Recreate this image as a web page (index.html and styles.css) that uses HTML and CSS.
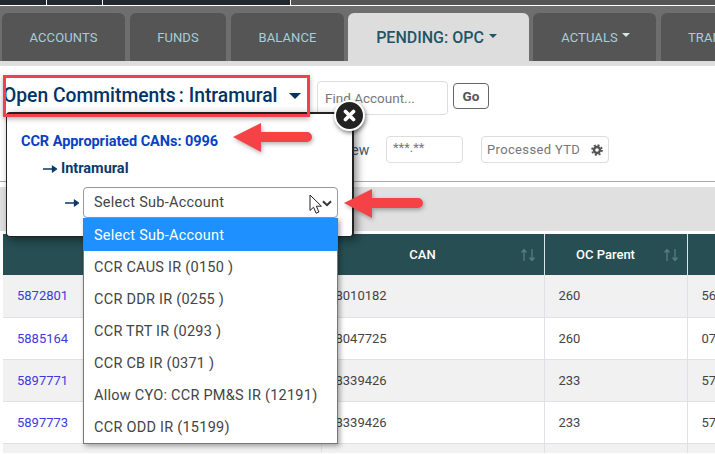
FILE: index.html
```html
<!DOCTYPE html>
<html lang="en">
<head>
<meta charset="utf-8">
<title>Open Commitments</title>
<link rel="stylesheet" href="styles.css">
</head>
<body>
<div class="topbar">
  <span class="seg seg-a"></span><span class="seg seg-b"></span><span class="seg seg-c"></span><span class="seg seg-d"></span>
</div>
<nav class="tabs">
  <a class="tab tab-accounts">ACCOUNTS</a>
  <a class="tab tab-funds">FUNDS</a>
  <a class="tab tab-balance">BALANCE</a>
  <a class="tab tab-active">PENDING: OPC<i class="caret caret-active"></i></a>
  <a class="tab tab-actuals">ACTUALS<i class="caret caret-tab"></i></a>
  <a class="tab tab-trans">TRANSACTIONS</a>
</nav>
<main class="content">
  <div class="row-title">
    <h1 class="title">Open Commitments<span class="colon">:</span>Intramural<i class="caret caret-title"></i></h1>
    <div class="find">Find Account...</div>
    <button class="go">Go</button>
  </div>
  <div class="row-filters">
    <span class="view">View</span>
    <div class="mask">***.**</div>
    <div class="ytd">Processed YTD
      <svg class="gear" viewBox="0 0 12 12"><circle cx="6" cy="6" r="3" fill="none" stroke="#555" stroke-width="2.4"/><circle cx="6" cy="6" r="4.9" fill="none" stroke="#555" stroke-width="1.8" stroke-dasharray="2 1.85"/></svg>
    </div>
  </div>
  <div class="rule"></div>
  <div class="band"></div>
  <table class="grid">
    <colgroup><col class="c1"><col class="c2"><col class="c3"><col class="c4"></colgroup>
    <thead>
      <tr>
        <th></th>
        <th>CAN<svg class="sort" viewBox="0 0 16 14"><path d="M4 13V2M1.5 4.500 4 1.500 6.500 4.500M12 1v11M9.500 9.500 12 12.500 14.500 9.500" fill="none" stroke="#5a7c80" stroke-width="1.300"/></svg></th>
        <th>OC Parent<svg class="sort" viewBox="0 0 16 14"><path d="M4 13V2M1.5 4.500 4 1.500 6.500 4.500M12 1v11M9.500 9.500 12 12.500 14.500 9.500" fill="none" stroke="#5a7c80" stroke-width="1.300"/></svg></th>
        <th></th>
      </tr>
    </thead>
    <tbody>
      <tr><td><a>5872801</a></td><td>8010182</td><td>260</td><td>56</td></tr>
      <tr><td><a>5885164</a></td><td>8047725</td><td>260</td><td>07</td></tr>
      <tr><td><a>5897771</a></td><td>8339426</td><td>233</td><td>57</td></tr>
      <tr><td><a>5897773</a></td><td>8339426</td><td>233</td><td>57</td></tr>
      <tr class="row-cut"><td></td><td></td><td></td><td></td></tr>
    </tbody>
  </table>
</main>

<div class="popover">
  <div class="pop-link">CCR Appropriated CANs: 0996</div>
  <div class="pop-level"><svg class="lead" viewBox="0 0 14 8"><path d="M0 4h12M9.500 1.200 13.500 4 9.500 6.800z" fill="#0b3a66" stroke="#0b3a66" stroke-width="1.300"/></svg>Intramural</div>
  <div class="pop-select">
    <svg class="lead" viewBox="0 0 14 8"><path d="M0 4h12M9.500 1.200 13.500 4 9.500 6.800z" fill="#0b3a66" stroke="#0b3a66" stroke-width="1.300"/></svg>
    <div class="select">Select Sub-Account
      <svg class="chev" viewBox="0 0 10 7"><path d="M1 1.200 5 5.200 9 1.200" fill="none" stroke="#333" stroke-width="2"/></svg>
      <svg class="pointer" viewBox="0 0 14 21"><path d="M1 1v15.500l3.600-3.300 2.500 6 2.800-1.200-2.500-5.800h5z" fill="#fff" stroke="#222" stroke-width="1"/></svg>
    </div>
  </div>
</div>
<div class="options">
  <div class="option option-on">Select Sub-Account</div>
  <div class="option">CCR CAUS IR (0150 )</div>
  <div class="option">CCR DDR IR (0255 )</div>
  <div class="option">CCR TRT IR (0293 )</div>
  <div class="option">CCR CB IR (0371 )</div>
  <div class="option">Allow CYO: CCR PM&amp;S IR (12191)</div>
  <div class="option">CCR ODD IR (15199)</div>
</div>
<div class="redbox"></div>
<button class="close"><svg viewBox="0 0 12 12"><path d="M2.300 2.300 9.700 9.700M9.700 2.300 2.300 9.700" stroke="#fff" stroke-width="3.400" stroke-linecap="round"/></svg></button>
<svg class="arrow arrow-one" viewBox="0 0 82 32"><path d="M2 16 30 2V11H76a5 5 0 0 1 0 10H30V31z" fill="#f44247"/></svg>
<svg class="arrow arrow-two" viewBox="0 0 82 32"><path d="M2 16 30 2V11H76a5 5 0 0 1 0 10H30V31z" fill="#f44247"/></svg>
</body>
</html>
```

FILE: styles.css
```css
* { box-sizing: border-box; }
html, body { margin: 0; padding: 0; }
body {
  width: 715px;
  height: 454px;
  overflow: hidden;
  position: relative;
  background: #fff;
  font-family: Roboto, "Liberation Sans", sans-serif;
  color: #444;
}

/* top strip */
.topbar { display: flex; height: 6px; border-bottom: 1px solid #fff; }
.seg { display: block; height: 5px; border-right: 1px solid #fff; background: #212830; }
.seg-a { width: 47px; }
.seg-b { width: 56px; }
.seg-c { width: 188px; }
.seg-d { flex: 1; background: #555; border-right: 0; }

/* tabs */
.tabs {
  display: flex;
  gap: 5px;
  height: 60px;
  padding: 7px 0 0 2px;
  background: #6e6e6e;
  border-bottom: 5px solid #ddd;
  overflow: hidden;
}
.tab {
  display: flex;
  flex: none;
  align-items: center;
  justify-content: center;
  height: 48px;
  background: #555;
  border-radius: 6px 6px 0 0;
  color: #a5cfdc;
  font-size: 13px;
  font-weight: 400;
  letter-spacing: .1px;
}
.tab-accounts { width: 123px; }
.tab-funds { width: 96px; }
.tab-balance { width: 113px; }
.tab-active {
  width: 181px;
  height: 53px;
  margin: 0 -1px 0 -1px;
  padding: 0 4px 5px 0;
  background: #ddd;
  color: #1f5566;
  font-size: 16px;
  font-weight: 500;
  letter-spacing: 0;
}
.tab-actuals { width: 123px; padding-left: 2px; }
.tab-trans { width: 140px; justify-content: flex-start; padding-left: 27px; }

.caret {
  display: inline-block;
  width: 0;
  height: 0;
  border-style: solid;
  border-color: currentColor transparent transparent;
}
.caret-active { margin-left: 5px; margin-top: -3px; border-width: 4.500px 4.500px 0; }
.caret-tab { margin-left: 4px; margin-top: -4px; border-width: 4px 4px 0; color: #d8e4e8; }
.caret-title { margin-left: 11px; margin-top: -1px; border-width: 6px 6.500px 0; vertical-align: middle; }

/* toolbars */
.row-title { display: flex; align-items: center; height: 49px; padding-top: 15px; }
.title {
  width: 317px;
  margin: 0 0 6px;
  padding-left: 3px;
  color: #003366;
  font-size: 19.300px;
  font-weight: 500;
  white-space: nowrap;
}
.colon { margin: 0 5px 0 3px; }
.find {
  display: flex;
  align-items: center;
  width: 131px;
  height: 34px;
  padding-left: 7px;
  border: 1px solid #ddd;
  border-radius: 4px;
  color: #777;
  font-size: 13.500px;
}
.go {
  width: 36px;
  height: 26px;
  margin: -5px 0 0 5px;
  padding: 0;
  background: #fff;
  border: 1px solid #666;
  border-radius: 4px;
  color: #555;
  font: 700 13.500px Roboto, sans-serif;
}
.row-filters { display: flex; align-items: center; height: 27px; margin-top: 21px; padding-left: 339px; }
.view { width: 47px; color: #3a5a70; font-size: 14px; }
.mask, .ytd {
  display: flex;
  align-items: center;
  height: 27px;
  border: 1px solid #ddd;
  border-radius: 4px;
  color: #777;
  font-size: 13px;
}
.mask { width: 77px; padding: 0 0 4px 6px; }
.ytd { width: 128px; margin-left: 18px; padding-left: 5px; letter-spacing: .35px; }
.gear { width: 12px; height: 12px; margin-left: 11px; }
.rule { height: 1px; margin-top: 18px; background: #aaa; }
.band { height: 44px; margin-top: 5px; background: #e0e0e0; }

/* table */
.grid {
  width: 712px;
  margin: 3px 0 0 3px;
  border-collapse: collapse;
  table-layout: fixed;
  font-size: 13px;
}
.c1 { width: 318px; }
.c2 { width: 223px; }
.c3 { width: 143px; }
.c4 { width: 28px; }
.grid th {
  position: relative;
  height: 41px;
  padding: 0 20px 0 0;
  border-right: 1px solid #dfe5e6;
  background: #264e53;
  color: #fff;
  font-size: 13px;
  font-weight: 500;
  text-align: center;
}
.grid td {
  height: 42px;
  padding: 0 0 0 14px;
  border-right: 1px solid #dee2e6;
  border-bottom: 1px solid #dee2e6;
  color: #444;
}
.grid .row-cut td { height: 10px; border-bottom: 0; }
.grid tbody tr:nth-child(odd) td { background: #f1f1f1; }
.grid a { color: #3a3ae0; }
.sort { position: absolute; right: 8px; top: 14px; width: 16px; height: 14px; }

/* popover (overlay) */
.popover {
  position: absolute;
  left: 6px;
  top: 112px;
  width: 348px;
  height: 125px;
  padding: 19px 0 0 14px;
  background: #fff;
  border: 1px solid #222;
  border-width: 2px 2px 1px 1px;
  border-radius: 4px;
  box-shadow: 3px 3px 8px rgba(0, 0, 0, .45);
}
.pop-link { color: #0a3fc4; font-size: 14.500px; font-weight: 700; letter-spacing: -.05px; }
.pop-level {
  display: flex;
  align-items: center;
  margin: 10px 0 0 22px;
  color: #0a3a6b;
  font-size: 14.500px;
  font-weight: 700;
}
.pop-level .lead { margin-right: 4px; }
.lead { flex: none; width: 14px; height: 8px; }
.pop-select { display: flex; align-items: center; margin: 10px 0 0 44px; }
.pop-select .lead { margin-right: 4px; }
.select {
  position: relative;
  display: flex;
  align-items: center;
  width: 255px;
  height: 31px;
  padding-left: 10px;
  background: #fff;
  border: 1px solid #999;
  border-radius: 4px;
  color: #444;
  font-size: 14.500px;
  letter-spacing: .25px;
}
.chev { position: absolute; right: 5px; top: 12px; width: 10px; height: 7px; }
.pointer { position: absolute; right: 14px; top: 6px; width: 14px; height: 21px; }

.options {
  position: absolute;
  left: 83px;
  top: 218px;
  width: 255px;
  background: #fff;
  border: 1px solid #777;
  border-top: 0;
  box-shadow: 2px 2px 5px rgba(0, 0, 0, .35);
}
.option {
  display: flex;
  align-items: center;
  height: 32px;
  padding-left: 10px;
  color: #444;
  font-size: 14.500px;
  letter-spacing: .25px;
}
.option-on { height: 33px; padding-top: 1px; background: #1e90ff; color: #fff; }

.redbox {
  position: absolute;
  left: 3px;
  top: 75px;
  width: 307px;
  height: 42px;
  border: 3px solid #f0414d;
  box-shadow: 0 2px 5px rgba(0, 0, 0, .3);
}
.close {
  position: absolute;
  left: 334px;
  top: 100px;
  width: 31px;
  height: 31px;
  padding: 7px;
  background: #222;
  border: 2px solid #fff;
  border-radius: 50%;
  box-shadow: 1px 2px 4px rgba(0, 0, 0, .5);
}
.close svg { display: block; width: 13px; height: 13px; }
.arrow {
  position: absolute;
  width: 82px;
  height: 32px;
  filter: drop-shadow(1px 2px 2px rgba(0, 0, 0, .3));
}
.arrow-one { left: 231px; top: 121px; }
.arrow-two { left: 342px; top: 187px; }
```
